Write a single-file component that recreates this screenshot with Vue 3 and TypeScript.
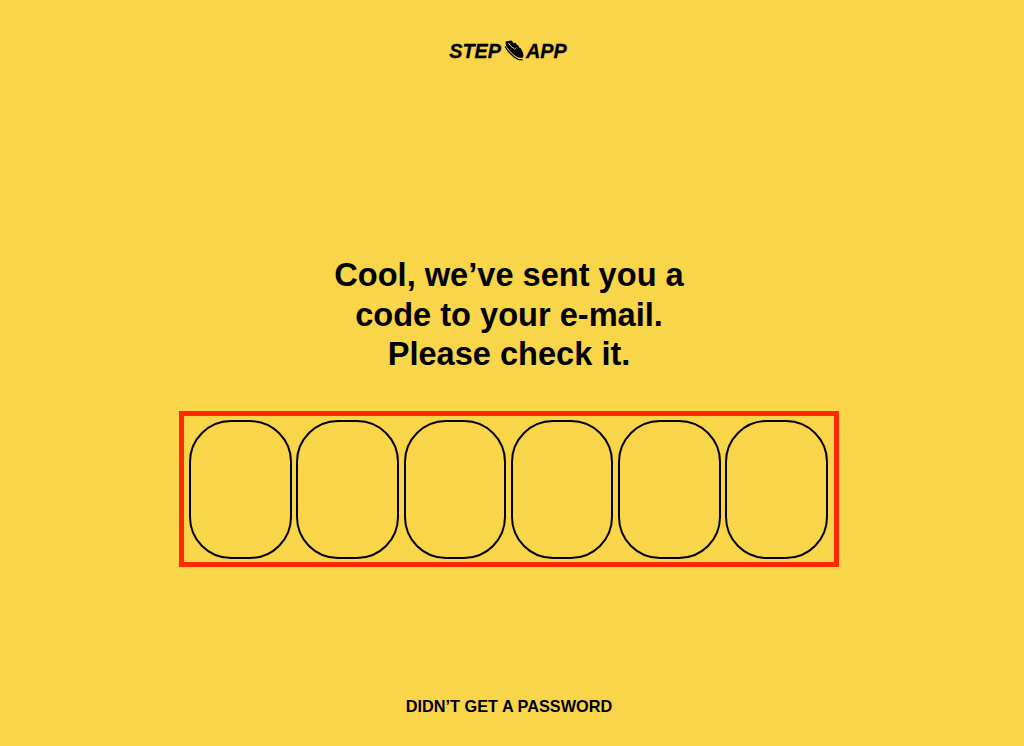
<script setup lang="ts">
// 6 digit code
const cells = [0, 1, 2, 3, 4, 5]
</script>

<template>
  <div class="page">
    <div class="logo">
      <span>STEP</span>
      <svg class="shoe" viewBox="0 0 20 22" width="20" height="22">
        <path d="M1.5 1.5 L7.5 .5 L10 3.5 L11.5 2.5 L13 5 L14.5 5.5 L15 7.5 L16.5 8 L19 12.5 L19.5 16 L18.5 18 L14 17.5 L9.5 14.5 L5.5 10.5 L2 6 Z" fill="#000" />
        <path d="M4.5 3 L7 6.5 L10 8.5 M12 7.5 L10.5 9.5" stroke="#f9d549" stroke-width="1" fill="none" />
        <path d="M1 6.5 L4.5 11.5 L9.5 16.5 L14 19.3 L18.5 19.8" stroke="#000" stroke-width="1.3" fill="none" />
      </svg>
      <span>APP</span>
    </div>
    <h1 class="title">Cool, we’ve sent you a<br />code to your e-mail.<br />Please check it.</h1>
    <div class="code">
      <div v-for="c in cells" :key="c" class="cell"></div>
    </div>
    <div class="resend">DIDN’T GET A PASSWORD</div>
  </div>
</template>

<style scoped>
.page {
  height: 746px;
  background: #f9d549;
  display: flex;
  flex-direction: column;
  align-items: center;
  font-family: "Liberation Sans", Arial, sans-serif;
  color: #000;
  box-sizing: border-box;
  padding: 40px 6px 0 0;
}

.logo {
  display: flex;
  align-items: center;
  height: 22px;
  margin-left: -2px;
  font-size: 19.8px;
  font-weight: 700;
  font-style: italic;
  -webkit-text-stroke: 0.3px #000;
}

.shoe {
  margin: 0 2px 0 3px;
}

.title {
  margin: 193px 0 0;
  font-size: 32.6px;
  line-height: 39.5px;
  font-weight: 700;
  text-align: center;
}

.code {
  margin-top: 37px;
  width: 660px;
  height: 156px;
  box-sizing: border-box;
  border: 5px solid #ff2a00;
  padding: 4px 6px 4px 5px;
  display: flex;
  justify-content: space-between;
}

.cell {
  width: 102.5px;
  height: 139px;
  box-sizing: border-box;
  border: 2px solid #000;
  border-radius: 42px;
}

.resend {
  margin-top: 130px;
  font-size: 16.3px;
  line-height: 18px;
  font-weight: 700;
}
</style>

<style>
body {
  margin: 0;
  background: #f9d549;
}
</style>
